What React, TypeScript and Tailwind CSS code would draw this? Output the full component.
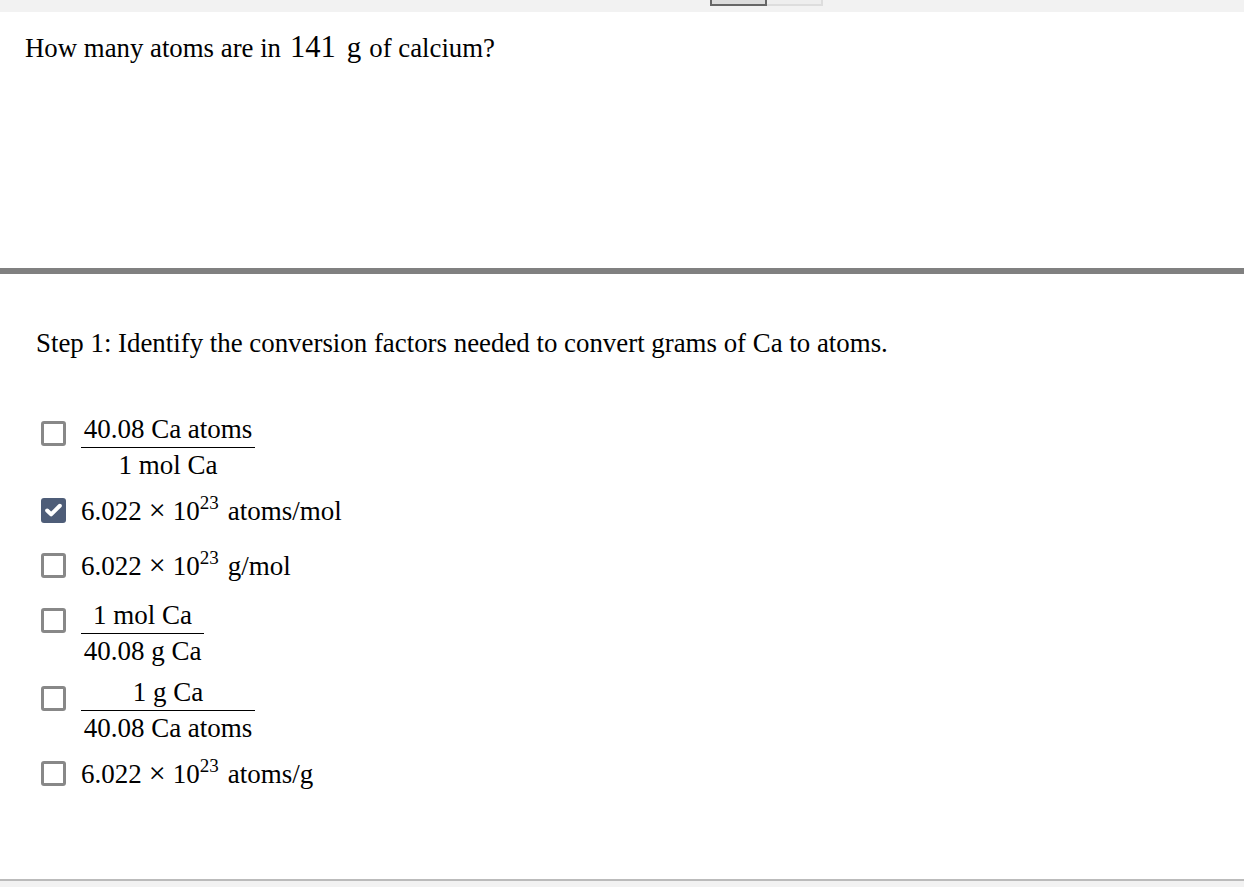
import { Check } from "lucide-react";

type Option = {
    id: string;
    checked?: boolean;
    spacing: string;
    box: string;
    num?: string;
    den?: string;
    lineWidth?: string;
    base?: string;
    unit?: string;
};

const options: Option[] = [
    { id: "a", spacing: "mt-[51px]", box: "mt-[9px]", num: "40.08 Ca atoms", den: "1 mol Ca", lineWidth: "w-[174px]" },
    { id: "b", checked: true, spacing: "mt-[10px]", box: "mt-[5px]", base: "6.022", unit: "atoms/mol" },
    { id: "c", spacing: "mt-[19px]", box: "mt-[5px]", base: "6.022", unit: "g/mol" },
    { id: "d", spacing: "mt-[14px]", box: "mt-[10px]", num: "1 mol Ca", den: "40.08 g Ca", lineWidth: "w-[123px]" },
    { id: "e", spacing: "mt-[6px]", box: "mt-[11px]", num: "1 g Ca", den: "40.08 Ca atoms", lineWidth: "w-[174px]" },
    { id: "f", spacing: "mt-[10px]", box: "mt-[5px]", base: "6.022", unit: "atoms/g" },
];

function Checkbox({ checked, className }: { checked?: boolean; className: string }) {
    if (checked) {
        return (
            <div className={`flex h-[25px] w-[25px] shrink-0 items-center justify-center rounded-[3px] bg-[#4e5d78] ${className}`}>
                <Check className="h-[19px] w-[19px] text-white" strokeWidth={5} />
            </div>
        );
    }
    return <div className={`h-[25px] w-[25px] shrink-0 rounded-[3px] border-[3px] border-[#888888] bg-white ${className}`} />;
}

export default function App() {
    return (
        <div className="h-[887px] bg-[#f2f2f2] font-['Liberation_Serif',serif] text-black">
            {/* top strip with tab stubs */}
            <div className="flex h-[12px] items-start pl-[710px]">
                <div className="h-[6px] w-[57px] border-x-2 border-b-2 border-[#666666] bg-[#dcdcdc]" />
                <div className="h-[6px] w-[56px] border-r-2 border-b-2 border-[#dddddd] bg-[#eeeeee]" />
            </div>

            <div className="h-[869px] border-b-2 border-[#bbbbbb] bg-white">
                {/* question */}
                <div className="h-[256px] pl-[25px] pt-[17px]">
                    <p className="text-[26.8px] leading-[36px]">
                        How many atoms are in<span className="ml-[9px] text-[30.5px]">141</span>
                        <span className="ml-[11px] mr-[8px] text-[29px]">g</span>of calcium?
                    </p>
                </div>
                <div className="h-[6px] bg-[#808080]" />

                {/* step */}
                <div className="pl-[36px] pt-[51px]">
                    <p className="text-[26.86px] leading-[36px]">
                        Step 1: Identify the conversion factors needed to convert grams of Ca to atoms.
                    </p>
                </div>

                <div className="flex flex-col pl-[41px]">
                    {options.map((o) => (
                        <div key={o.id} className={`flex items-start gap-[15px] ${o.spacing}`}>
                            <Checkbox checked={o.checked} className={o.box} />
                            {o.num ? (
                                <div className={`flex flex-col items-center text-[27px] leading-[35px] ${o.lineWidth}`}>
                                    <div className="w-full border-b border-black text-center">{o.num}</div>
                                    <div className="text-center">{o.den}</div>
                                </div>
                            ) : (
                                <div className="h-[36px] whitespace-nowrap text-[27px] leading-[36px]">
                                    {o.base}
                                    <span className="mx-[7px] text-[30px] leading-[0]">×</span>
                                    10
                                    <sup className="top-[-0.6em] text-[19px] leading-[0]">23</sup>
                                    <span className="ml-[9px]">{o.unit}</span>
                                </div>
                            )}
                        </div>
                    ))}
                </div>
            </div>
        </div>
    );
}
